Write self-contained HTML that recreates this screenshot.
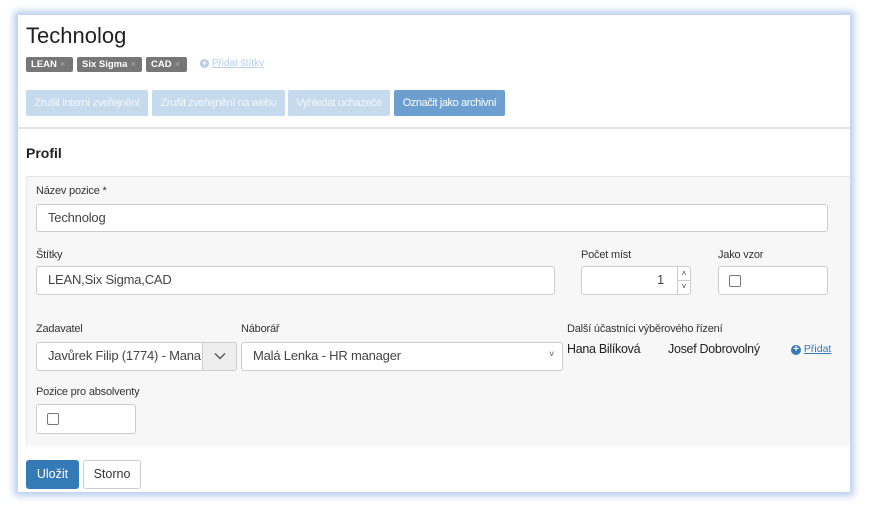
<!DOCTYPE html>
<html><head><meta charset="utf-8"><style>
*{box-sizing:border-box}
body{margin:0;width:869px;height:507px;background:#fff;font-family:"Liberation Sans",Arial,sans-serif;font-size:12px;color:#333;position:relative;overflow:hidden}
.frame{position:absolute;left:18px;top:15px;width:832px;height:477px;background:#fff;box-shadow:0 0 7px 4px #b9cdee}
.a{position:absolute}
.tag{position:absolute;top:57px;height:15px;background:#777;color:#fff;font-weight:bold;font-size:9.5px;line-height:15px;padding-left:5px;border-radius:2px}
.tag span{color:#aaa;font-weight:normal;margin-left:3px}
.btn{position:absolute;top:90px;height:26px;line-height:26px;text-align:center;font-size:11px;letter-spacing:-0.4px;border-radius:2px;background:#c6daee;color:#f2f7fc}
.inp{position:absolute;background:#fff;border:1px solid #ccc;border-radius:3px;font-size:13px;line-height:26px;padding-left:11px;color:#444;letter-spacing:-0.2px}
.lab{position:absolute;font-size:11px;color:#333;letter-spacing:-0.2px}
.cb{position:absolute;width:12px;height:12px;border:1px solid #777;border-radius:2px;background:#fff}
</style></head><body>
<div class="frame"></div>
<div class="a" style="left:26px;top:23px;font-size:22px;color:#222">Technolog</div>
<div class="tag" style="left:26px;width:47px">LEAN<span>×</span></div>
<div class="tag" style="left:77px;width:65px">Six Sigma<span>×</span></div>
<div class="tag" style="left:146px;width:41px">CAD<span>×</span></div>
<div class="a" style="left:200px;top:58px;font-size:10px;color:#b5cde6"><span style="display:inline-block;width:9px;height:9px;border-radius:50%;background:#b5cde6;color:#fff;font-size:9px;line-height:9px;text-align:center;font-weight:bold">+</span> <u>Přidat štítky</u></div>
<div class="btn" style="left:26px;width:122px">Zrušit interní zveřejnění</div>
<div class="btn" style="left:152px;width:133px">Zrušit zveřejnění na webu</div>
<div class="btn" style="left:288px;width:102px">Vyhledat uchazeče</div>
<div class="btn" style="left:394px;width:111px;background:#6c9fd0;color:#fff">Označit jako archivní</div>
<div class="a" style="left:18px;top:127px;width:832px;height:2px;background:#e3e3e3"></div>
<div class="a" style="left:26px;top:145px;font-size:14px;font-weight:bold;color:#222">Profil</div>
<div class="a" style="left:26px;top:176px;width:824px;height:270px;background:#f7f7f7;border-top:1px solid #e5e5e5;border-left:1px solid #e8e8e8"></div>
<div class="lab" style="left:36px;top:185px">Název pozice *</div>
<div class="inp" style="left:36px;top:204px;width:792px;height:28px">Technolog</div>
<div class="lab" style="left:36px;top:249px">Štítky</div>
<div class="inp" style="left:36px;top:266px;width:519px;height:29px">LEAN,Six Sigma,CAD</div>
<div class="lab" style="left:581px;top:249px">Počet míst</div>
<div class="inp" style="left:581px;top:266px;width:110px;height:29px;text-align:right;padding-right:26px">1</div>
<div class="a" style="left:677px;top:267px;width:13px;height:27px;border-left:1px solid #ccc;font-size:8px;line-height:13px;text-align:center;color:#333">˄<br>˅</div>
<div class="a" style="left:677px;top:280px;width:13px;height:1px;background:#ccc"></div>
<div class="lab" style="left:718px;top:249px">Jako vzor</div>
<div class="inp" style="left:718px;top:266px;width:110px;height:29px"></div>
<div class="cb" style="left:729px;top:275px"></div>
<div class="lab" style="left:36px;top:323px">Zadavatel</div>
<div class="inp" style="left:36px;top:342px;width:201px;height:29px;overflow:hidden;white-space:nowrap">Javůrek Filip (1774) - Mana</div>
<div class="a" style="left:202px;top:342px;width:35px;height:29px;background:#eee;border:1px solid #ccc;border-radius:0 3px 3px 0;text-align:center;line-height:27px;font-size:12px">
<svg width="12" height="8" viewBox="0 0 12 8"><path d="M1 1.5L6 6.5L11 1.5" fill="none" stroke="#555" stroke-width="1.4"/></svg></div>
<div class="lab" style="left:241px;top:323px">Náborář</div>
<div class="inp" style="left:241px;top:342px;width:322px;height:29px">Malá Lenka - HR manager</div>
<div class="a" style="left:549px;top:349px;font-size:9px;color:#555">˅</div>
<div class="lab" style="left:567px;top:323px">Další účastníci výběrového řízení</div>
<div class="a" style="left:567px;top:342px;font-size:12.5px;color:#222;letter-spacing:-0.3px">Hana Bilíková</div>
<div class="a" style="left:668px;top:342px;font-size:12.5px;color:#222;letter-spacing:-0.3px">Josef Dobrovolný</div>
<div class="a" style="left:791px;top:343px;font-size:10.5px;color:#337ab7"><span style="display:inline-block;width:10px;height:10px;border-radius:50%;background:#337ab7;color:#fff;font-size:10px;line-height:10px;text-align:center;font-weight:bold">+</span> <u>Přidat</u></div>
<div class="lab" style="left:36px;top:386px">Pozice pro absolventy</div>
<div class="inp" style="left:36px;top:404px;width:100px;height:30px"></div>
<div class="cb" style="left:47px;top:413px"></div>
<div class="a" style="left:26px;top:460px;width:53px;height:29px;background:#337ab7;border-radius:3px;color:#fff;font-size:12.5px;line-height:29px;text-align:center">Uložit</div>
<div class="a" style="left:83px;top:460px;width:58px;height:29px;background:#fff;border:1px solid #ccc;border-radius:3px;color:#333;font-size:12.5px;line-height:27px;text-align:center">Storno</div>
</body></html>
